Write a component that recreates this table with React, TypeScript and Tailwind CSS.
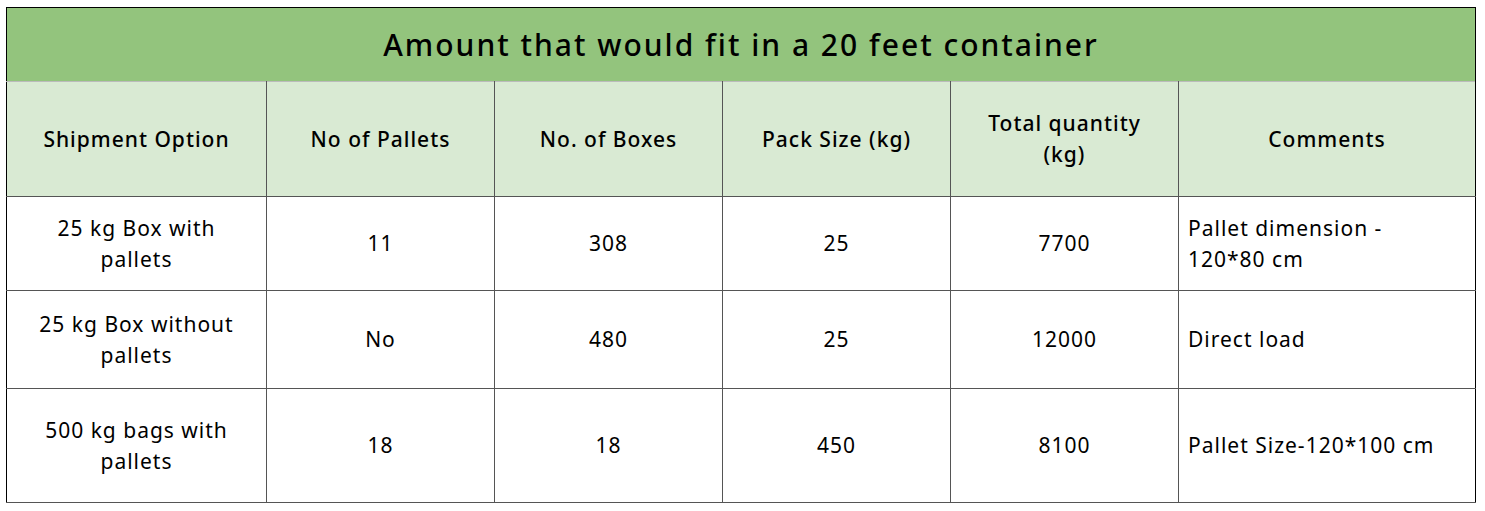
import { Fragment } from "react";

const headers = [
  ["Shipment Option"],
  ["No of Pallets"],
  ["No. of Boxes"],
  ["Pack Size (kg)"],
  ["Total quantity", "(kg)"],
  ["Comments"],
];

const rows = [
  { option: "25 kg Box with pallets", pallets: "11", boxes: "308", pack: "25", total: "7700", comment: "Pallet dimension - 120*80 cm", h: "h-[94px]" },
  { option: "25 kg Box without pallets", pallets: "No", boxes: "480", pack: "25", total: "12000", comment: "Direct load", h: "h-[98px]" },
  { option: "500 kg bags with pallets", pallets: "18", boxes: "18", pack: "450", total: "8100", comment: "Pallet Size-120*100 cm", h: "h-[114px]" },
];

const widths = ["w-[260px]", "w-[228px]", "w-[228px]", "w-[228px]", "w-[228px]", "w-[297px]"];

export default function App() {
  return (
    <div className="h-[511px] w-[1485px] bg-white pl-[6px] pt-[7px] font-['Noto_Sans',sans-serif] text-black">
      <table className="table-fixed border-collapse border border-black">
        <colgroup>
          {widths.map((w, i) => (
            <col className={w} key={i} />
          ))}
        </colgroup>
        <thead>
          <tr className="h-[74px] bg-[#93c47d]">
            <th
              className="text-center text-[30px] font-medium tracking-[2px]"
              colSpan={6}
            >
              Amount that would fit in a 20 feet container
            </th>
          </tr>
          <tr className="h-[115px] bg-[#d9ead3]">
            {headers.map((lines, i) => (
              <th
                className={`border border-[#555] border-t-[#bbb] px-2 text-center text-[21px] leading-[31px] font-medium tracking-[1px] ${i === 0 ? "border-l-black" : ""} ${i === 5 ? "border-r-black" : ""}`}
                key={lines[0]}
              >
                {lines.map((l, j) => (
                  <Fragment key={l}>
                    {j > 0 && <br />}
                    {l}
                  </Fragment>
                ))}
              </th>
            ))}
          </tr>
        </thead>
        <tbody>
          {rows.map((r) => (
            <tr className={r.h} key={r.option}>
              <td className="border border-[#555] border-l-black px-5 text-center text-[21px] leading-[31px] tracking-[1px]">
                {r.option}
              </td>
              <td className="border border-[#555] text-center text-[21px] tracking-[1px]">{r.pallets}</td>
              <td className="border border-[#555] text-center text-[21px] tracking-[1px]">{r.boxes}</td>
              <td className="border border-[#555] text-center text-[21px] tracking-[1px]">{r.pack}</td>
              <td className="border border-[#555] text-center text-[21px] tracking-[1px]">{r.total}</td>
              <td className="border border-[#555] border-r-black px-[9px] text-left text-[21px] leading-[31px] tracking-[1px]">
                {r.comment}
              </td>
            </tr>
          ))}
        </tbody>
      </table>
    </div>
  );
}
